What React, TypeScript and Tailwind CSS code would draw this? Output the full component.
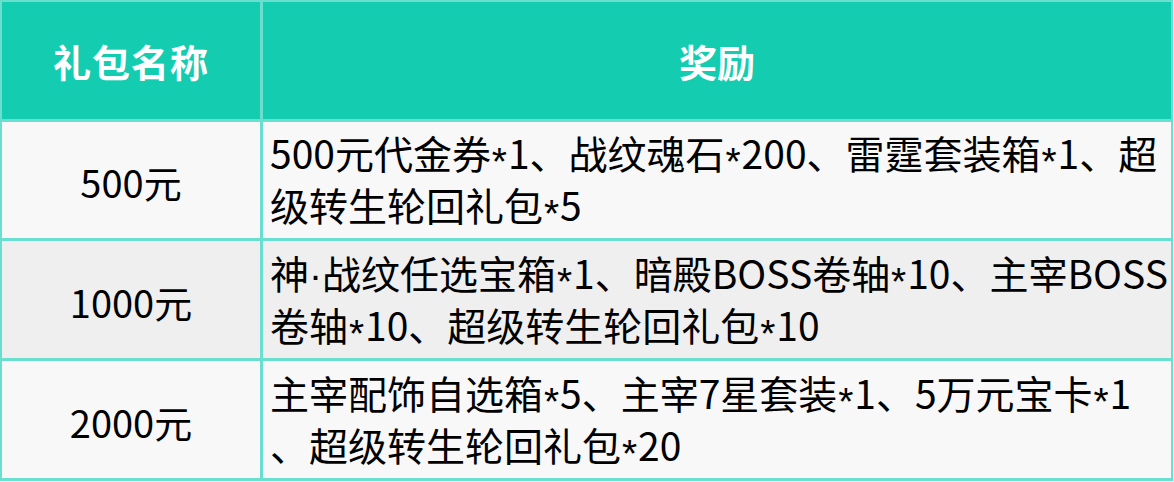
import React from "react";

const rows = [
  {
    name: "500元",
    lines: ["500元代金券*1、战纹魂石*200、雷霆套装箱*1、超", "级转生轮回礼包*5"],
    bg: "bg-[#f8f8f8]",
  },
  {
    name: "1000元",
    lines: ["神·战纹任选宝箱*1、暗殿BOSS卷轴*10、主宰BOSS", "卷轴*10、超级转生轮回礼包*10"],
    bg: "bg-[#efefef]",
  },
  {
    name: "2000元",
    lines: ["主宰配饰自选箱*5、主宰7星套装*1、5万元宝卡*1", "、超级转生轮回礼包*20"],
    bg: "bg-[#f8f8f8]",
  },
];

function renderLine(l: string) {
  const parts: React.ReactNode[] = [];
  let buf = "";
  let k = 0;
  for (const ch of l) {
    if (ch === "*" || ch === "·") {
      if (buf) parts.push(buf);
      buf = "";
      parts.push(
        ch === "*" ? (
          <span
            key={k++}
            className="relative top-[6px] inline-block w-[17px] text-center"
            style={{ fontFamily: '"Liberation Sans", sans-serif' }}
          >
            *
          </span>
        ) : (
          <span
            key={k++}
            className="inline-block"
            style={{ fontFamily: '"Liberation Sans", sans-serif' }}
          >
            ·
          </span>
        )
      );
    } else {
      buf += ch;
    }
  }
  if (buf) parts.push(buf);
  return parts;
}

export default function App() {
  return (
    <div
      className="w-[1174px] h-[482px] bg-white"
      style={{ fontFamily: '"Noto Sans CJK SC", "Noto Sans", sans-serif' }}
    >
      <div className="w-[1173px] bg-[#6adfd0] pt-[2px] pl-[2px] pr-[2px] pb-[3px]">
        <div className="grid grid-cols-[258px_908px] grid-rows-[117px_116px_117px_117px] gap-[3px]">
          <div className="bg-[#14cdb1] flex items-center justify-center text-white text-[38px] font-bold leading-none tracking-[1px]">
            礼包名称
          </div>
          <div className="bg-[#14cdb1] flex items-center justify-center text-white text-[38px] font-bold leading-none">
            奖励
          </div>
          {rows.map((r) => (
            <React.Fragment key={r.name}>
              <div className={`${r.bg} flex items-center justify-center text-black text-[38px] leading-none pt-[4px]`}>
                {r.name}
              </div>
              <div className={`${r.bg} flex flex-col justify-center pl-[7px] text-black text-[39px] leading-[48px] whitespace-nowrap`}>
                {r.lines.map((l, i) => (
                  <div key={i}>{renderLine(l)}</div>
                ))}
              </div>
            </React.Fragment>
          ))}
        </div>
      </div>
    </div>
  );
}
